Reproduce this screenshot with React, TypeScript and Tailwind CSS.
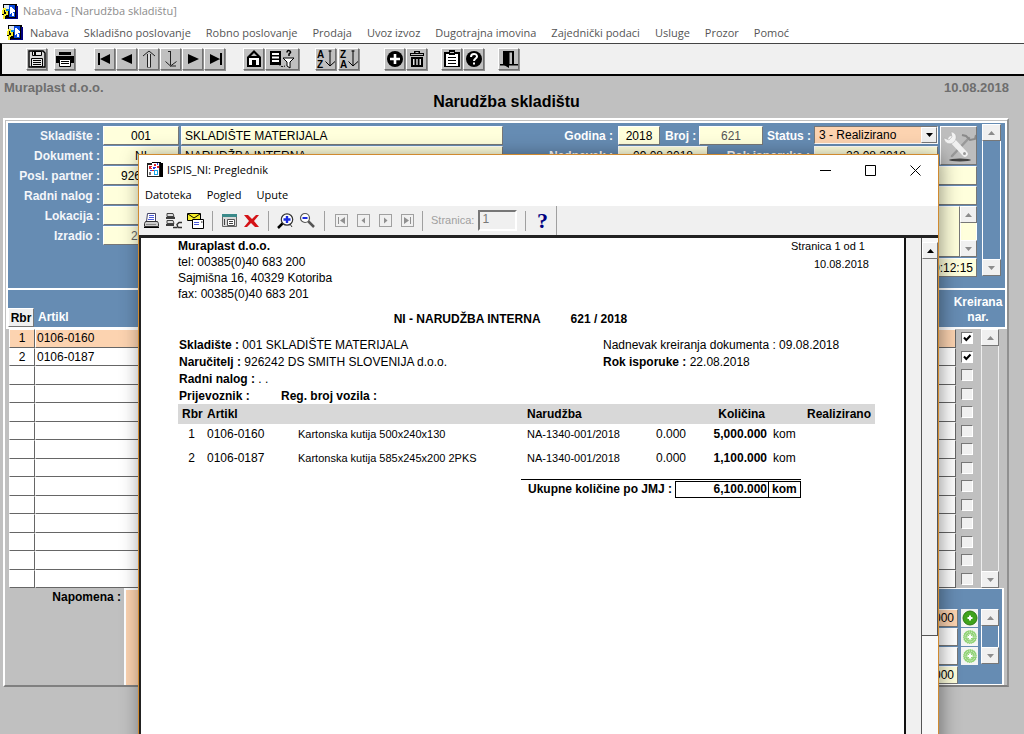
import type { ReactNode } from "react";

type IconProps = { className?: string };

const menuItems = [
  "Nabava",
  "Skladišno poslovanje",
  "Robno poslovanje",
  "Prodaja",
  "Uvoz izvoz",
  "Dugotrajna imovina",
  "Zajednički podaci",
  "Usluge",
  "Prozor",
  "Pomoć",
];

const gridRows = Array.from({ length: 14 }, (_, i) => {
  if (i === 0) return { rbr: "1", artikl: "0106-0160", created: true };
  if (i === 1) return { rbr: "2", artikl: "0106-0187", created: true };
  return { rbr: "", artikl: "", created: false };
});

const reportRows = [
  { rbr: "1", artikl: "0106-0160", naziv: "Kartonska kutija 500x240x130", narudzba: "NA-1340-001/2018", real: "0.000", kol: "5,000.000" },
  { rbr: "2", artikl: "0106-0187", naziv: "Kartonska kutija 585x245x200 2PKS", narudzba: "NA-1340-001/2018", real: "0.000", kol: "1,100.000" },
];

function AppIcon({ className }: IconProps) {
  return (
    <svg viewBox="0 0 16 16" className={className} shapeRendering="crispEdges" aria-hidden="true">
      <rect x="1" y="0" width="14" height="14" fill="#000" />
      <rect x="14" y="2" width="2" height="13" fill="#000080" />
      <rect x="3" y="14" width="12" height="1" fill="#000080" />
      <rect x="2" y="1" width="5" height="4" fill="#dfe9f5" />
      <rect x="7" y="1" width="6" height="12" fill="#0a4ae0" />
      <path d="M8 3h2v1h1v1h1v1h1v2h-2v1h1v3h-2V9H9v1H8z" fill="#fff" />
      <rect x="4" y="5" width="3" height="2" fill="#0a8bd8" />
      <path d="M1 4h3v3h2v4H4v4H1v-4H0V6h1z" fill="#f5ee28" />
      <path d="M2 6h1v2h1v2H2zM0 10h2v1H0zM3 12h1v3H3z" fill="#000" />
    </svg>
  );
}

function ReportIcon({ className }: IconProps) {
  return (
    <svg viewBox="0 0 16 16" className={className} shapeRendering="crispEdges" aria-hidden="true">
      <rect x="5" y="0" width="9" height="13" fill="#000" />
      <rect x="12" y="1" width="4" height="14" fill="#000" />
      <rect x="0" y="1" width="13" height="14" fill="#222" />
      <rect x="1" y="3" width="4" height="11" fill="#fff" />
      <rect x="5" y="1" width="7" height="13" fill="#fff" />
      <path d="M2 4h3v1h-1v1h1v1H2zM7 2h2v2H7zM10 4h2v2h-2zM5 8h2v1H5z" fill="#e0242a" />
      <path d="M6 5h3v1H8v1H6zM10 1h1v2h-1zM3 8h2v1H3z" fill="#2a3be0" />
      <path d="M7 8h4v5H7z" fill="#1aa5e8" />
      <path d="M8 9h2v3H8z" fill="#fff" />
      <path d="M2 10h2v3H2z" fill="#777" />
    </svg>
  );
}

function ToolButton({ label, wide, children }: { label: string; wide?: boolean; children: ReactNode }) {
  return (
    <button
      type="button"
      aria-label={label}
      className={
        "flex h-[22px] items-center justify-center border border-t-white border-l-white border-r-[#707070] border-b-[#707070] bg-[#c0c0c0] shadow-[1px_1px_0_#909090] " +
        (wide ? "w-[34px]" : "w-[21px]")
      }
    >
      {children}
    </button>
  );
}

function Glyph({ children, wide }: { children: ReactNode; wide?: boolean }) {
  return (
    <svg viewBox={wide ? "0 0 30 20" : "0 0 20 20"} className={wide ? "h-5 w-[30px] shrink-0" : "size-5 shrink-0"} fill="#000" aria-hidden="true">
      {children}
    </svg>
  );
}

function SortGlyph({ top, bottom }: { top: string; bottom: string }) {
  return (
    <Glyph>
      <text x="1" y="9" fontSize="10" fontWeight="700" fontFamily="Liberation Sans, sans-serif">{top}</text>
      <text x="1" y="19" fontSize="10" fontWeight="700" fontFamily="Liberation Sans, sans-serif">{bottom}</text>
      <path d="M14 1.500v15M12.500 2h3" fill="none" stroke="#000" />
      <path d="M9.500 12.500l4.500 4.500 5-4.500" fill="none" stroke="#000" />
    </Glyph>
  );
}

function MainToolbar() {
  return (
    <div role="toolbar" className="flex h-[33px] items-center gap-[14px] border-t border-b-2 border-l-2 border-t-[#444] border-b-black border-l-black bg-[#f0f0f0] pl-6">
      <div className="flex gap-[7px]">
        <ToolButton label="Spremi">
          <Glyph>
            <path d="M2 2h14l2 2v14H2z" fill="#d8d8d8" stroke="#000" strokeWidth="1.400" />
            <path d="M5.500 2.500h9v4h-9zM4.500 9.500h11v8h-11z" fill="#e8e8e8" stroke="#000" />
            <path d="M7 3h2v3H7zM6 11h8v1H6zM6 13h8v1H6zM6 15h8v1H6z" />
          </Glyph>
        </ToolButton>
        <ToolButton label="Ispis">
          <Glyph>
            <path d="M4 3h12v3H4zM1 7h18v7h-3v-3H4v3H1z" />
            <path d="M4.500 10.500h11v7h-11z" fill="#fff" stroke="#000" />
            <path d="M6 12.500h8M6 14.500h8" stroke="#000" />
          </Glyph>
        </ToolButton>
      </div>
      <div className="ml-[5px] flex gap-px">
        <ToolButton label="Prvi"><Glyph><path d="M3 4h2v12H3zM5 10l10-5v10z" /></Glyph></ToolButton>
        <ToolButton label="Prethodni"><Glyph><path d="M4 10l11-5v10z" /></Glyph></ToolButton>
        <ToolButton label="Gore"><Glyph><path d="M8.500 18V6M11.500 18V6M4 7l6-5 6 5M8 18h4M8 5.500h4" fill="none" stroke="#222" /><path d="M9 5h2v13H9z" fill="#ddd" /></Glyph></ToolButton>
        <ToolButton label="Dolje"><Glyph><path d="M9.500 2v14M4.500 12.500l5 4.500 6-4.500M7 2.500h3M9 17h6" fill="none" stroke="#222" /></Glyph></ToolButton>
        <ToolButton label="Sljedeći"><Glyph><path d="M16 10L5 5v10z" /></Glyph></ToolButton>
        <ToolButton label="Zadnji"><Glyph><path d="M15 4h2v12h-2zM15 10L5 5v10z" /></Glyph></ToolButton>
      </div>
      <div className="ml-1 flex gap-px">
        <ToolButton label="Početak">
          <Glyph>
            <path d="M10 1l7 7v10H3V8z" />
            <path d="M5 9h10v7H5z" fill="#fff" />
            <path d="M8 11h4v6H8z" />
            <path d="M10 4l3 3H7z" fill="#c0c0c0" />
          </Glyph>
        </ToolButton>
        <ToolButton label="Upit" wide>
          <Glyph wide>
            <path d="M3 2h11v14H3z" />
            <path d="M5 4h7v2H5zM5 7.500h7v2H5zM5 11h7v2H5z" fill="#fff" />
            <path d="M12 15c1 3 4 3 6 2" fill="none" stroke="#000" strokeDasharray="2 1" />
            <path d="M16 9h11l-4 4v6l-3-2v-4z" fill="#fff" stroke="#000" />
            <path d="M20 3.500c0-3 4-2 3.500 0l-1.500 1.500v2" fill="none" stroke="#000" strokeWidth="1.500" />
          </Glyph>
        </ToolButton>
      </div>
      <div className="ml-0.5 flex gap-0.5">
        <ToolButton label="Sortiraj uzlazno"><SortGlyph top="A" bottom="Z" /></ToolButton>
        <ToolButton label="Sortiraj silazno"><SortGlyph top="Z" bottom="A" /></ToolButton>
      </div>
      <div className="ml-[11px] flex gap-px">
        <ToolButton label="Dodaj"><Glyph><circle cx="10" cy="10" r="8" /><path d="M10 5v10M5 10h10" stroke="#fff" strokeWidth="2.600" /></Glyph></ToolButton>
        <ToolButton label="Obriši">
          <Glyph>
            <path d="M7 2h6v2h4v3H3V4h4z" />
            <path d="M4 8h12v10H4z" />
            <path d="M6 10h1.500v6H6zM9.300 10h1.400v6H9.300zM12.500 10H14v6h-1.500z" fill="#e0e0e0" />
            <path d="M8.500 3h3v1h-3zM4 5h12v1H4z" fill="#c0c0c0" />
          </Glyph>
        </ToolButton>
      </div>
      <div className="flex gap-px">
        <ToolButton label="Popis">
          <Glyph>
            <path d="M2 3h16v15H2z" />
            <path d="M4 5h12v12H4z" fill="#fff" />
            <path d="M7 1h6v5H7z" />
            <path d="M8 3h4v1H8z" fill="#c0c0c0" />
            <path d="M6 8.500h8M6 11.500h8M6 14.500h8" stroke="#000" />
          </Glyph>
        </ToolButton>
        <ToolButton label="Pomoć">
          <Glyph>
            <circle cx="10" cy="10" r="8" />
            <path d="M7 8c0-4 6-4 6-.5 0 2-3 2-3 4.500" fill="none" stroke="#fff" strokeWidth="2" />
            <path d="M9 13.500h2v2H9z" fill="#fff" />
          </Glyph>
        </ToolButton>
      </div>
      <ToolButton label="Izlaz">
        <Glyph>
          <path d="M4 2h11v13h4v1.500H1V15h3z" />
          <path d="M10.500 3.500H13V15h-2.500z" fill="#c0c0c0" />
          <path d="M5 2l5 2v15l-5-3z" />
        </Glyph>
      </ToolButton>
    </div>
  );
}

function Arrow({ dir, dark }: { dir: "up" | "down"; dark?: boolean }) {
  return (
    <svg viewBox="0 0 7 4" className="h-1 w-[7px]" fill={dark ? "#000" : "#8c8c8c"} aria-hidden="true">
      <path d={dir === "up" ? "M0 4h7L3.500 0z" : "M0 0h7L3.500 4z"} />
    </svg>
  );
}

function ArrowButton({ dir, dark }: { dir: "up" | "down"; dark?: boolean }) {
  return (
    <button
      type="button"
      aria-label={dir === "up" ? "Pomakni gore" : "Pomakni dolje"}
      className="flex h-[17px] w-full shrink-0 items-center justify-center border border-t-white border-l-white border-r-[#777] border-b-[#777] bg-[#f0f0f0]"
    >
      <Arrow dir={dir} dark={dark} />
    </button>
  );
}

function ScrollBar({ className, track }: { className: string; track: string }) {
  return (
    <div className={"flex shrink-0 flex-col " + className}>
      <ArrowButton dir="up" />
      <div className={"flex-1 border-x " + track} />
      <ArrowButton dir="down" />
    </div>
  );
}

const fieldBase =
  "h-[19px] min-w-0 rounded-none border border-t-white border-l-white border-r-[#777] border-b-[#777] px-[3px] text-xs outline-none ";

function Field({ label, value, className }: { label: string; value: string; className: string }) {
  return <input aria-label={label} defaultValue={value} className={fieldBase + className} />;
}

const rowLabel = "w-[95px] shrink-0 pr-[3px] text-right text-xs font-bold text-[#f4f6fa]";

function HeaderPanel() {
  return (
    <section className="flex h-[169px] items-start gap-[5px] border-2 border-white bg-[#668cb3] pt-px pr-1">
      <div className="flex min-w-0 flex-1 flex-col gap-px pt-0.5">
        <div className="flex gap-0.5">
          <div className="flex min-w-0 flex-1 flex-col gap-px">
            <div className="flex items-center">
              <label htmlFor="skladiste" className={rowLabel}>Skladište :</label>
              <input id="skladiste" defaultValue="001" className={fieldBase + "mr-0.5 w-[76px] bg-[#ffffdc] text-center"} />
              <Field label="Naziv skladišta" value="SKLADIŠTE MATERIJALA" className="flex-1 bg-[#ffffdc]" />
              <label htmlFor="godina" className="w-[115px] shrink-0 pr-[5px] text-right text-xs font-bold text-white">Godina :</label>
              <div className="flex w-[320px] shrink-0 items-center">
                <input id="godina" defaultValue="2018" className={fieldBase + "w-[42px] bg-[#ffffdc] text-center"} />
                <label htmlFor="broj" className="w-[39px] shrink-0 pl-[5px] text-xs font-bold whitespace-nowrap text-white">Broj :</label>
                <input id="broj" defaultValue="621" className={fieldBase + "w-[64px] bg-[#ffffdc] text-center text-[#555]"} />
                <label htmlFor="status" className="w-[51px] shrink-0 pl-1 text-xs font-bold whitespace-nowrap text-white">Status :</label>
                <div className="relative h-[19px] flex-1">
                  <select id="status" className="block h-[18px] w-full appearance-none rounded-none border border-t-[#777] border-l-[#777] border-r-white border-b-white bg-[#fcd3b0] pl-1 text-xs leading-4">
                    <option>3 - Realizirano</option>
                  </select>
                  <span className="pointer-events-none absolute top-px right-px flex h-4 w-4 items-center justify-center border border-t-white border-l-white border-r-[#777] border-b-[#777] bg-[#f0f0f0]">
                    <Arrow dir="down" dark />
                  </span>
                </div>
              </div>
            </div>
            <div className="flex items-center">
              <label htmlFor="dokument" className={rowLabel}>Dokument :</label>
              <input id="dokument" defaultValue="NI" className={fieldBase + "mr-0.5 w-[76px] bg-[#ffffdc] text-center"} />
              <Field label="Naziv dokumenta" value="NARUDŽBA INTERNA" className="flex-1 bg-[#ffffdc]" />
              <label htmlFor="nadnevak" className="w-[115px] shrink-0 pr-[5px] text-right text-xs font-bold text-white">Nadnevak :</label>
              <div className="flex w-[320px] shrink-0 items-center">
                <input id="nadnevak" defaultValue="09.08.2018" className={fieldBase + "w-[90px] bg-[#ffffdc] text-center"} />
                <label htmlFor="rok" className="w-[106px] shrink-0 pr-1 text-right text-xs font-bold text-white">Rok isporuke :</label>
                <input id="rok" defaultValue="22.08.2018" className={fieldBase + "flex-1 bg-[#ffffdc] text-center"} />
              </div>
            </div>
          </div>
          <button type="button" aria-label="Alati" className="flex h-[39px] w-[37px] items-center justify-center border border-t-white border-l-white border-r-[#777] border-b-[#777] bg-[#bdbdbd]">
            <svg viewBox="0 0 34 34" className="size-[34px] shrink-0" aria-hidden="true">
              <ellipse cx="18" cy="31" rx="11" ry="1.500" fill="#444" />
              <path d="M27 9L10 27" stroke="#999" strokeWidth="2.500" strokeLinecap="round" />
              <path d="M20 6l4 1 4 4 5-1 1-4" fill="none" stroke="#8a8a8a" strokeWidth="2" />
              <path d="M9 10l14 15" stroke="#f0f0f0" strokeWidth="5.500" strokeLinecap="round" />
              <path d="M2 9c0 5 6 8 10 4s2-10-3-10l1 5-3 3z" fill="#f2f2f2" stroke="#aaa" strokeWidth=".5" />
              <circle cx="22.500" cy="24.500" r="1.500" fill="#999" />
            </svg>
          </button>
        </div>
        <div className="flex items-center">
          <label htmlFor="partner" className={rowLabel}>Posl. partner :</label>
          <input id="partner" defaultValue="926242" className={fieldBase + "mr-0.5 w-[76px] bg-[#ffffdc] text-center"} />
          <Field label="Naziv partnera" value="" className="flex-1 bg-[#ffffdc]" />
        </div>
        <div className="flex items-center">
          <label htmlFor="nalog" className={rowLabel}>Radni nalog :</label>
          <input id="nalog" className={fieldBase + "flex-1 bg-[#ffffdc]"} />
        </div>
        <div className="flex justify-between">
          <div className="flex flex-col gap-px">
            <div className="flex items-center">
              <label htmlFor="lokacija" className={rowLabel}>Lokacija :</label>
              <input id="lokacija" className={fieldBase + "w-[76px] bg-[#ffffdc]"} />
            </div>
            <div className="flex items-center">
              <label htmlFor="izradio" className={rowLabel}>Izradio :</label>
              <input id="izradio" defaultValue="204" className={fieldBase + "w-[76px] bg-[#ffffdc] text-center text-[#666]"} />
            </div>
          </div>
          <div className="flex w-[200px] flex-col gap-px">
            <div className="flex h-[51px]">
              <textarea aria-label="Opis" className="min-w-0 flex-1 resize-none border border-t-white border-r-[#777] border-b-[#777] border-l-white bg-[#ffffdc] outline-none" />
              <ScrollBar className="w-[17px]" track="border-white bg-[#ffffdc]" />
            </div>
            <Field label="Vrijeme" value="10:12:15" className="w-full bg-[#ffffdc] text-right" />
          </div>
        </div>
      </div>
      <ScrollBar className="h-[152px] w-[19px]" track="border-white bg-[#668cb3]" />
    </section>
  );
}

function ItemsGrid() {
  return (
    <section>
      <div className="flex h-[39px] items-end border-2 border-t-0 border-white bg-[#668cb3] text-xs font-bold text-white">
        <span className="flex h-[19px] w-[26px] items-center justify-center border border-t-white border-l-white border-r-[#777] border-b-[#777] bg-[#f0f0f0] text-black">Rbr</span>
        <span className="flex-1 pb-0.5 pl-1">Artikl</span>
        <span className="w-[54px] pb-0.5 text-center leading-[15px]">Kreirana nar.</span>
      </div>
      <div className="flex h-[259px] gap-[3px] pr-2 pl-[3px]">
        <table aria-label="Stavke narudžbe" className="h-full flex-1 table-fixed border-separate border-spacing-0 text-xs leading-[14px]">
          <colgroup>
            <col className="w-[26px]" />
            <col />
            <col className="w-[22px]" />
          </colgroup>
          <tbody>
            {gridRows.map((row, i) => {
              const cell =
                "border border-t-white border-l-white border-b-[#666] border-r-[#666] p-0 " + (i === 0 ? "bg-[#fcd3b0] " : "bg-white ");
              return (
                <tr key={i} className="h-[18px]">
                  <td className={cell + "text-center"}>{row.rbr}</td>
                  <td className={cell + "pl-px"}>{row.artikl}</td>
                  <td className="p-0">
                    <label className="relative mx-auto block size-3">
                      <input
                        type="checkbox"
                        aria-label="Kreirana nar."
                        defaultChecked={row.created}
                        className="peer block size-3 appearance-none border border-t-[#777] border-l-[#777] border-r-white border-b-white bg-[#f0f0f0] checked:bg-white"
                      />
                      <svg viewBox="0 0 12 12" className="absolute inset-0 hidden size-3 peer-checked:block" aria-hidden="true">
                        <path d="M3 5.500l2.300 2.500L9.500 3.500" fill="none" stroke="#000" strokeWidth="2" />
                      </svg>
                    </label>
                  </td>
                </tr>
              );
            })}
          </tbody>
        </table>
        <ScrollBar className="w-[18px]" track="border-[#eee] bg-[#c0c0c0]" />
      </div>
    </section>
  );
}

function AddButton({ faded }: { faded?: boolean }) {
  return (
    <button type="button" aria-label="Dodaj stavku" className="flex h-[18px] w-[17px] items-center justify-center bg-[#f4f4f4]">
      <svg viewBox="0 0 16 16" className="size-4" aria-hidden="true">
        <circle cx="8" cy="8" r="7" fill={faded ? "#8fd174" : "#3fa31c"} />
        <circle cx="8" cy="8" r="7" fill="none" stroke={faded ? "#fff" : "#2c7a12"} strokeDasharray={faded ? "1 1" : undefined} />
        {faded ? (
          <>
            <circle cx="8" cy="8" r="5" fill="none" stroke="#e9f8e2" strokeDasharray="1 1" />
            <circle cx="8" cy="8" r="3" fill="none" stroke="#e9f8e2" strokeDasharray="1 1" />
          </>
        ) : null}
        <path d="M8 5.500v5M5.500 8h5" stroke="#fff" strokeWidth="2" />
      </svg>
    </button>
  );
}

function FooterPanel() {
  return (
    <section className="flex h-[97px]">
      <label htmlFor="napomena" className="w-[115px] shrink-0 text-right text-xs leading-[18px] font-bold">Napomena :</label>
      <textarea id="napomena" className="ml-[3px] min-w-0 flex-1 resize-none border-2 border-r-0 border-b-0 border-white bg-[#fcd3b0] outline-none" />
      <div className="mr-[3px] flex w-[180px] justify-end gap-[3px] border-t border-r-2 border-b border-white bg-[#668cb3] pt-5 pr-[3px]">
        <div className="flex flex-1 flex-col gap-px">
          <Field label="Količina 1" value="5,000.000" className="h-[18px] bg-[#fcd3b0] px-0 text-right" />
          <Field label="Količina 2" value="" className="h-[18px] bg-white" />
          <Field label="Količina 3" value="" className="h-[18px] bg-white" />
          <Field label="Ukupno" value="6,100.000" className="h-[18px] bg-[#ffffdc] px-0 text-right" />
        </div>
        <div className="flex flex-col gap-px">
          <AddButton />
          <AddButton faded />
          <AddButton faded />
        </div>
        <ScrollBar className="h-[55px] w-[18px]" track="border-white bg-[#668cb3]" />
      </div>
    </section>
  );
}

function Separator() {
  return <span className="mx-2 h-5 w-px bg-[#a0a0a0]" />;
}

function PreviewButton({ label, children }: { label: string; children: ReactNode }) {
  return (
    <button type="button" aria-label={label} className="flex size-[17px] items-center justify-center">
      <svg viewBox="0 0 17 17" className="size-[17px]" aria-hidden="true">{children}</svg>
    </button>
  );
}

function PageButton({ label, d }: { label: string; d: string }) {
  return (
    <button type="button" disabled aria-label={label} className="flex size-[13px] items-center justify-center border border-[#a0a0a0]">
      <svg viewBox="0 0 9 9" className="size-[9px]" fill="#909090" aria-hidden="true"><path d={d} /></svg>
    </button>
  );
}

function PreviewToolbar() {
  return (
    <div role="toolbar" className="flex h-8 shrink-0 items-stretch border-b-[3px] border-[#222] bg-[#f0f0f0]">
      <div className="flex w-[418px] items-center border-r border-[#a0a0a0] pl-1">
        <div className="flex gap-[5px]">
          <PreviewButton label="Ispis">
            <path d="M4.500 1.500h8v8h-9z" fill="#fff" stroke="#446" />
            <path d="M6 3.500h5M6 5.500h5M5 7.500h6" stroke="#4a5ad8" />
            <path d="M2.500 9.500h12l1 2v3h-14v-3z" fill="#ccc" stroke="#333" />
            <path d="M1 15.500h15" stroke="#000" />
            <path d="M3 12.500h10" stroke="#888" />
          </PreviewButton>
          <PreviewButton label="Postavke ispisa">
            <path d="M2 1.500h6l1 3H2z" fill="#ddd" stroke="#444" />
            <path d="M1 6h9M1 13h8" stroke="#000" strokeWidth="1.600" />
            <path d="M2 8.500h6l1 3H2z" fill="#ddd" stroke="#444" />
            <path d="M17 10.500h-3l-2 2 1 3h4M8 15.500h4" fill="none" stroke="#333" strokeWidth="1.400" />
          </PreviewButton>
          <PreviewButton label="Pošalji poštom">
            <path d="M.5 1.500h13v7H.5z" fill="#f5ee28" stroke="#000" />
            <path d="M1 2l6 4 6-4" fill="none" stroke="#000" />
            <path d="M5.500 7.500h11v9h-11z" fill="#fff" stroke="#000" />
            <path d="M7 10.500h5M7 12.500h5" stroke="#4a5ad8" />
            <path d="M14 9h1.500v2H14z" fill="#888" />
          </PreviewButton>
        </div>
        <Separator />
        <div className="flex gap-[5px]">
          <PreviewButton label="Novi pregled">
            <path d="M1.500 2.500h14v12h-14z" fill="#d8d8d8" stroke="#666" />
            <path d="M1 2h15v3H1z" fill="#3a8a8a" />
            <path d="M6.500 7.500h7v6h-7z" fill="#fff" stroke="#555" />
            <path d="M3.500 7v6M8 9.500h4M8 11.500h4" stroke="#444" />
          </PreviewButton>
          <PreviewButton label="Zatvori pregled">
            <path d="M1 3h4l4 4 4-4h3l-5 6 5 6h-4l-4-4-4 4H1l5-6z" fill="#d41216" />
          </PreviewButton>
        </div>
        <Separator />
        <div className="flex gap-[5px]">
          <PreviewButton label="Povećaj">
            <path d="M6 11l-5 5" stroke="#000" strokeWidth="2.500" />
            <circle cx="10" cy="7.500" r="5.700" fill="#fff" stroke="#333" strokeWidth="1.200" />
            <path d="M10 4v7M6.500 7.500h7" stroke="#1a2be0" strokeWidth="2.400" />
            <path d="M13 12l2 3" stroke="#333" />
          </PreviewButton>
          <PreviewButton label="Smanji">
            <path d="M9 9l6 6" stroke="#555" strokeWidth="2.500" />
            <circle cx="6" cy="6" r="4.500" fill="#fff" stroke="#555" strokeWidth="1.200" />
            <path d="M3.500 6h5" stroke="#1a2be0" strokeWidth="2" />
          </PreviewButton>
        </div>
        <Separator />
        <div className="ml-0.5 flex gap-[9px]">
          <PageButton label="Prva stranica" d="M1 1h1v7H1zM8 1v7L3 4.500z" />
          <PageButton label="Prethodna stranica" d="M6 1.500v6L2.500 4.500z" />
          <PageButton label="Sljedeća stranica" d="M3 1.500v6l3.500-3z" />
          <PageButton label="Zadnja stranica" d="M7 1h1v7H7zM1 1v7l5-3.500z" />
        </div>
        <Separator />
        <label htmlFor="stranica" className="text-[11px] text-[#a0a0a0]">Stranica:</label>
        <input id="stranica" defaultValue="1" className="ml-1 h-[21px] w-[39px] border-2 border-t-[#777] border-l-[#777] border-r-white border-b-white bg-[#f0f0f0] px-0.5 pb-1 text-xs text-[#777] outline-none" />
        <Separator />
        <button type="button" aria-label="Pomoć" className="flex w-4 items-center justify-center font-['Liberation_Serif',serif] text-[22px] leading-5 font-bold text-[#000080]">?</button>
      </div>
    </div>
  );
}

function ReportPage() {
  return (
    <article className="min-w-0 flex-1 overflow-hidden border-r-2 border-[#111] bg-white pr-[29px] pl-[37px] text-xs text-black">
      <header className="flex justify-between leading-4">
        <div>
          <p className="font-bold">Muraplast d.o.o.</p>
          <p>tel: 00385(0)40 683 200</p>
          <p>Sajmišna 16, 40329 Kotoriba</p>
          <p>fax: 00385(0)40 683 201</p>
        </div>
        <div className="pr-[6px] text-right text-[11px]">
          <p className="pr-1">Stranica 1 od 1</p>
          <p className="pt-0.5">10.08.2018</p>
        </div>
      </header>
      <h2 className="mt-[9px] flex justify-center gap-[30px] pr-8 leading-4 font-bold">
        <span>NI - NARUDŽBA INTERNA</span>
        <span>621 / 2018</span>
      </h2>
      <div className="mt-[10px] flex pl-px leading-[17px]">
        <div className="w-[424px]">
          <p><b>Skladište :</b> 001 SKLADIŠTE MATERIJALA</p>
          <p><b>Naručitelj :</b> 926242 DS SMITH SLOVENIJA d.o.o.</p>
          <p><b>Radni nalog :</b> . .</p>
          <p className="flex leading-4 font-bold"><span className="w-[102px]">Prijevoznik :</span><span>Reg. broj vozila :</span></p>
        </div>
        <div>
          <p>Nadnevak kreiranja dokumenta : 09.08.2018</p>
          <p><b>Rok isporuke :</b> 22.08.2018</p>
        </div>
      </div>
      <table className="w-full table-fixed border-collapse">
        <colgroup>
          <col className="w-[29px]" />
          <col className="w-[91px]" />
          <col />
          <col className="w-[100px]" />
          <col className="w-[59px]" />
          <col className="w-[81px]" />
          <col className="w-[34px]" />
          <col className="w-[74px]" />
        </colgroup>
        <thead>
          <tr className="h-5 bg-[#d8d8d8] text-left">
            <th className="p-0 pl-1">Rbr</th>
            <th className="p-0">Artikl</th>
            <th className="p-0" aria-label="Naziv" />
            <th className="p-0">Narudžba</th>
            <th className="p-0" />
            <th className="p-0 pr-0.5 text-right">Količina</th>
            <th className="p-0" />
            <th className="p-0 pr-1 text-right">Realizirano</th>
          </tr>
        </thead>
        <tbody>
          {reportRows.map((row) => (
            <tr key={row.rbr} className="h-6 align-top leading-5">
              <td className="p-0 pr-3 text-right">{row.rbr}</td>
              <td className="p-0">{row.artikl}</td>
              <td className="p-0 text-[11px]">{row.naziv}</td>
              <td className="p-0 text-[11px]">{row.narudzba}</td>
              <td className="p-0 text-right">{row.real}</td>
              <td className="p-0 text-right font-bold">{row.kol}</td>
              <td className="p-0 pl-1.5">kom</td>
              <td className="p-0" />
            </tr>
          ))}
        </tbody>
      </table>
      <div className="mt-[7px] flex justify-end pr-[74px] font-bold">
        <div className="flex w-[280px] items-start border-t border-black">
          <span className="flex-1 pl-[7px] leading-[19px]">Ukupne količine po JMJ :</span>
          <div className="mt-px flex h-[17px] w-[126px] border border-black leading-[15px]">
            <span className="flex-1 border-r border-black pr-px text-right">6,100.000</span>
            <span className="w-[31px] pl-[3px]">kom</span>
          </div>
        </div>
      </div>
    </article>
  );
}

function PreviewWindow() {
  return (
    <div
      role="dialog"
      aria-label="ISPIS_NI: Preglednik"
      className="absolute top-[154px] -bottom-6 left-[138px] flex w-[801px] flex-col border border-[#d08a30] bg-white shadow-[2px_2px_18px_rgba(0,0,0,0.42)]"
    >
      <div className="flex h-[30px] shrink-0 items-center pl-2 font-['Open_Sans',sans-serif] text-[11px] text-black">
        <ReportIcon className="size-4" />
        <span className="ml-1 flex-1">ISPIS_NI: Preglednik</span>
        <button type="button" aria-label="Minimiziraj" className="flex w-[45px] justify-center">
          <svg viewBox="0 0 11 11" className="size-[11px]" stroke="#000" fill="none" aria-hidden="true"><path d="M0 5.500h11" /></svg>
        </button>
        <button type="button" aria-label="Maksimiziraj" className="flex w-[45px] justify-center">
          <svg viewBox="0 0 11 11" className="size-[11px]" stroke="#000" fill="none" aria-hidden="true"><path d="M.5.5h10v10H.5z" /></svg>
        </button>
        <button type="button" aria-label="Zatvori" className="flex w-[45px] justify-center">
          <svg viewBox="0 0 11 11" className="size-[11px]" stroke="#000" fill="none" aria-hidden="true"><path d="M.5.5l10 10M10.500.5l-10 10" /></svg>
        </button>
      </div>
      <nav className="flex h-[21px] shrink-0 items-center gap-[15px] pl-[6px] font-['Open_Sans',sans-serif] text-[11px] text-black">
        <button type="button">Datoteka</button>
        <button type="button">Pogled</button>
        <button type="button">Upute</button>
      </nav>
      <PreviewToolbar />
      <div className="flex min-h-0 flex-1 border-l-2 border-[#222]">
        <ReportPage />
        <div className="w-[15px] bg-[#f0f0f0]" />
        <div className="flex w-[17px] flex-col border-l border-[#555] bg-[#f8f8f8] pt-1">
          <ArrowButton dir="up" dark />
          <div className="h-[377px] border-r border-b border-[#555] bg-[#f0f0f0]" />
        </div>
      </div>
    </div>
  );
}

export default function App() {
  return (
    <div className="relative flex h-screen flex-col overflow-hidden bg-[#c0c0c0] font-['Liberation_Sans',Arial,sans-serif] text-black">
      <div className="bg-white font-['Open_Sans',sans-serif] text-[11px]">
        <div className="flex h-[23px] items-center pl-0.5 text-[#8c8c8c]">
          <AppIcon className="size-4" />
          <span className="ml-[5px]">Nabava - [Narudžba skladištu]</span>
        </div>
        <nav className="flex h-5 items-center gap-[15px] pl-[7px] text-[#555]">
          <AppIcon className="-mr-2 size-4" />
          {menuItems.map((item) => (
            <button key={item} type="button" className="whitespace-nowrap">{item}</button>
          ))}
        </nav>
      </div>
      <MainToolbar />
      <header className="grid h-[42px] grid-cols-[1fr_auto_1fr] pt-0.5 pr-[15px] pl-1 text-[13px] font-bold text-[#6e6e6e]">
        <span>Muraplast d.o.o.</span>
        <h1 className="pt-3 text-base leading-6 text-black">Narudžba skladištu</h1>
        <span className="text-right">10.08.2018</span>
      </header>
      <main className="mr-[15px] ml-[3px] border-2 border-t-white border-l-white border-r-[#909090] border-b-[#808080] pt-px pr-0 pl-px">
        <HeaderPanel />
        <ItemsGrid />
        <FooterPanel />
      </main>
      <PreviewWindow />
    </div>
  );
}
